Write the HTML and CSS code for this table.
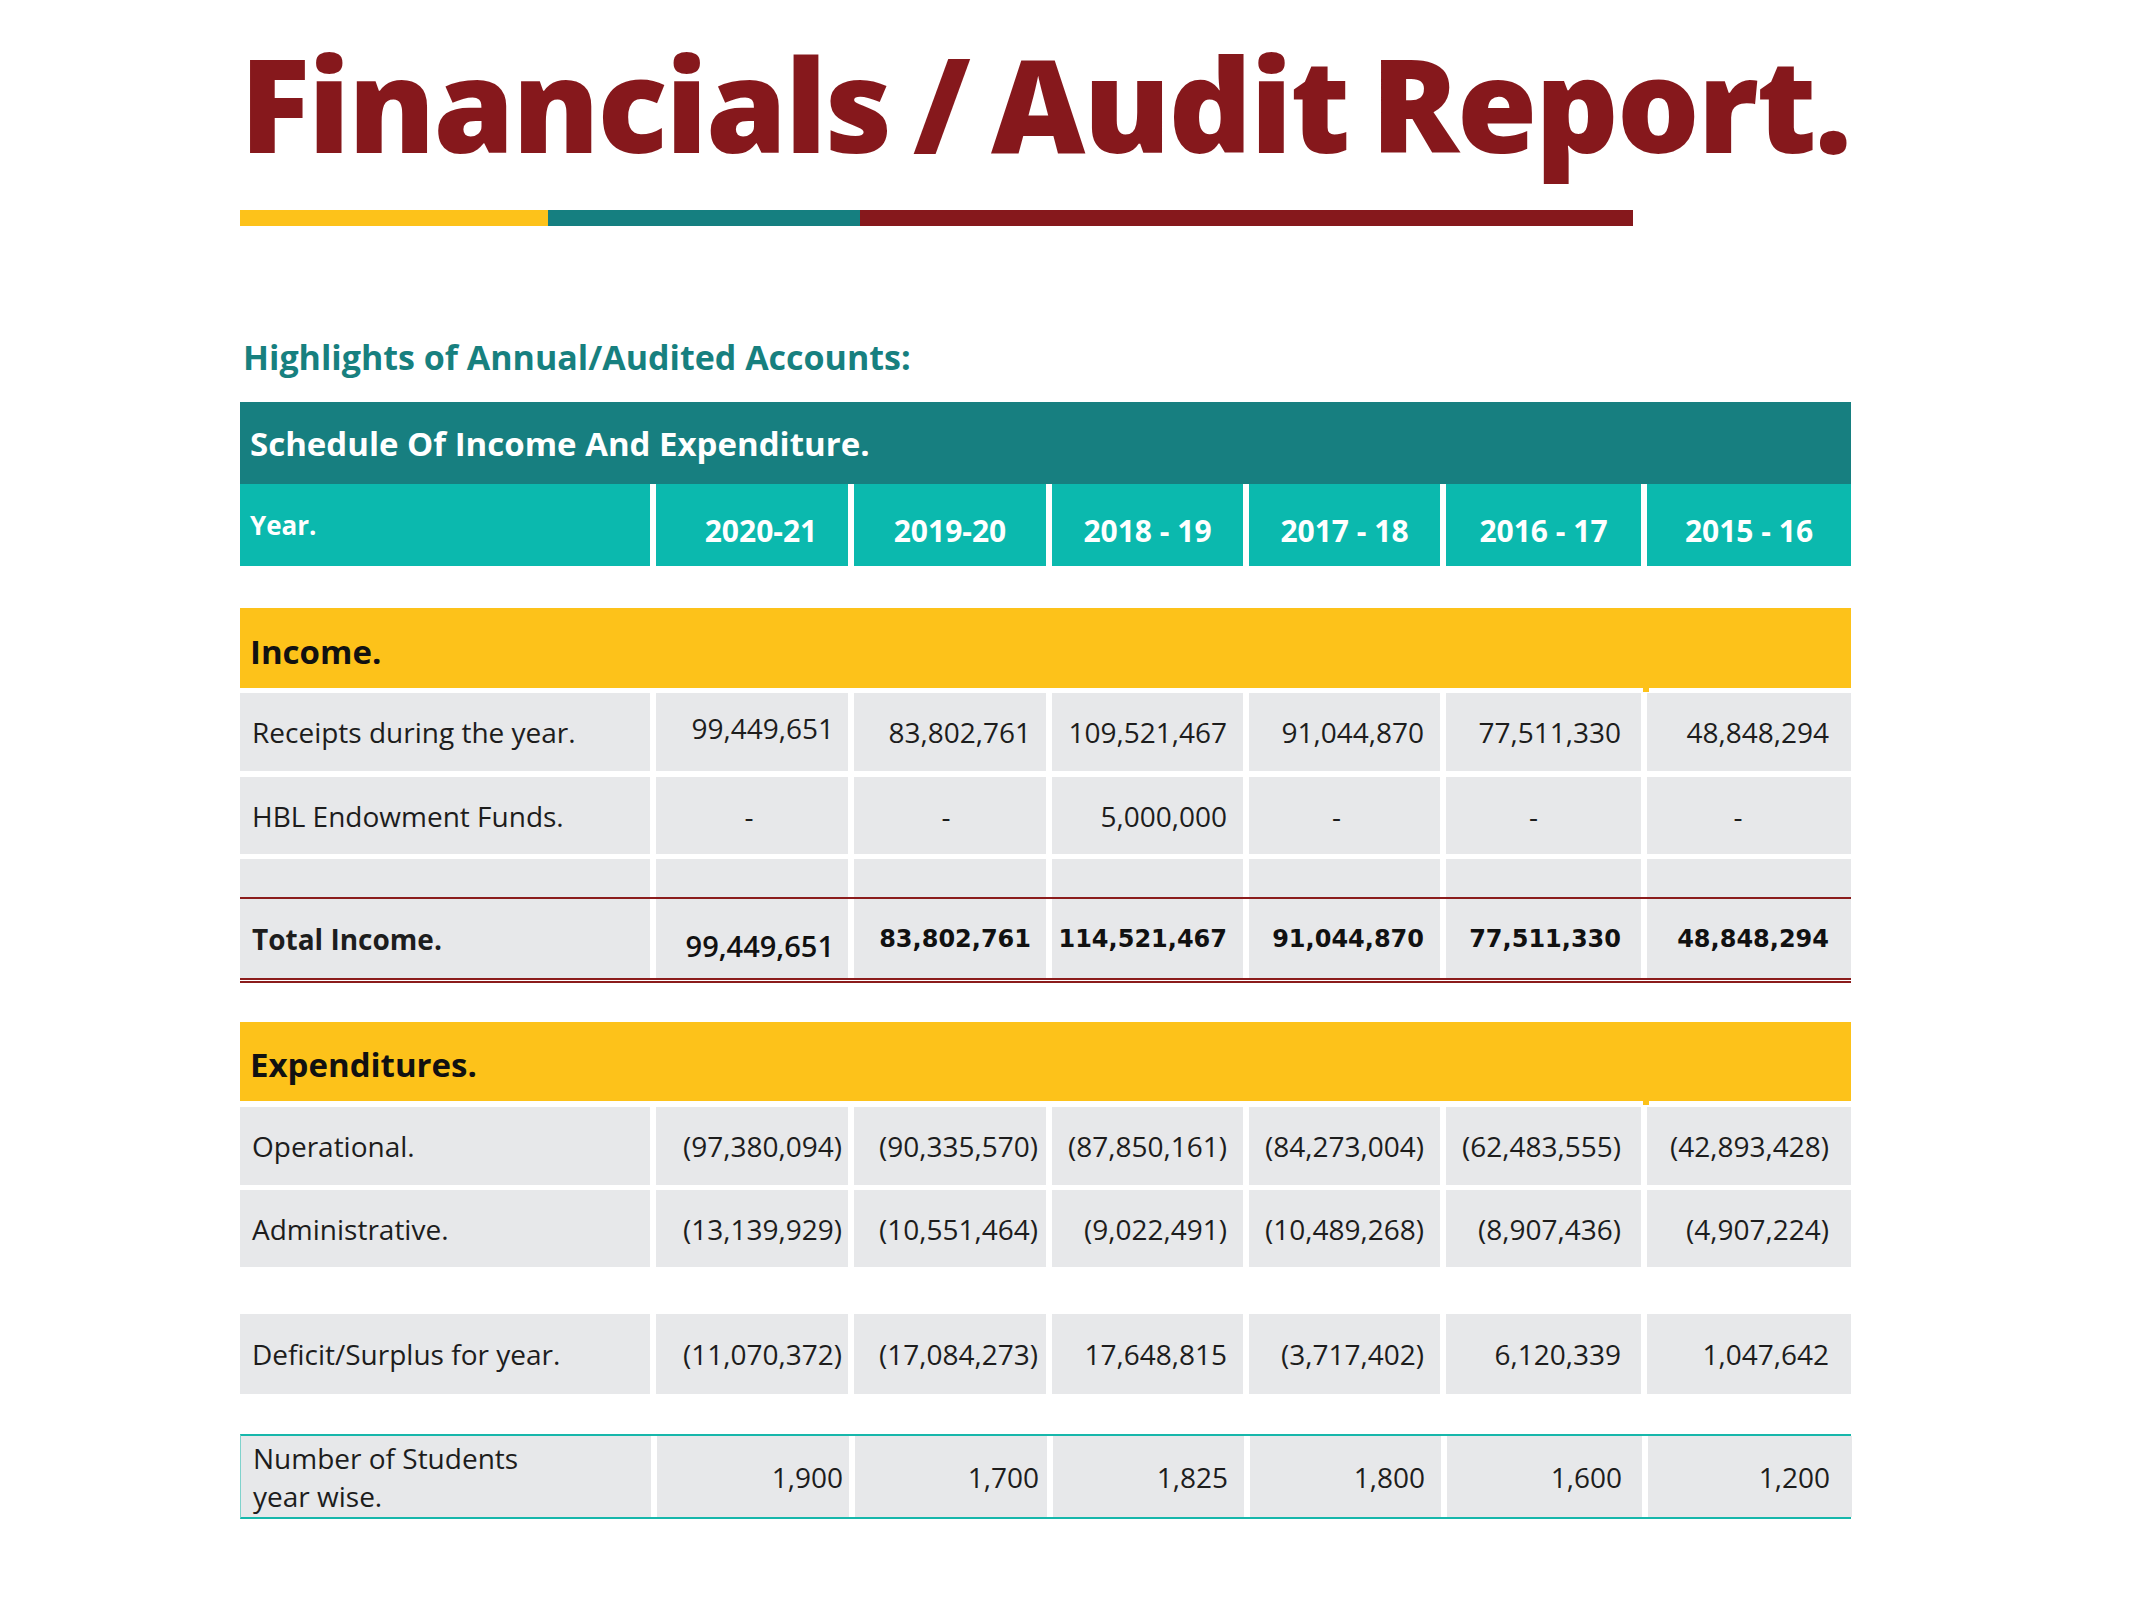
FILE: index.html
```html
<!DOCTYPE html>
<html lang="en">
<head>
<meta charset="utf-8">
<title>Financials / Audit Report.</title>
<link rel="stylesheet" href="styles.css">
</head>
<body>
<div class="page">
  <h1 class="title">Financials / Audit Report.</h1>
  <div class="stripe"><span class="s-yellow"></span><span class="s-teal"></span><span class="s-maroon"></span></div>
  <h2 class="subtitle">Highlights of Annual/Audited Accounts:</h2>

  <div class="table">
    <div class="caption">Schedule Of Income And Expenditure.</div>
    <div class="row head">
      <div class="cell label">Year.</div>
      <div class="cell year">2020-21</div>
      <div class="cell year">2019-20</div>
      <div class="cell year">2018 - 19</div>
      <div class="cell year">2017 - 18</div>
      <div class="cell year">2016 - 17</div>
      <div class="cell year">2015 - 16</div>
    </div>

    <div class="section income">Income.</div>
    <div class="row data receipts">
      <div class="cell label">Receipts during the year.</div>
      <div class="cell num first-up">99,449,651</div>
      <div class="cell num">83,802,761</div>
      <div class="cell num">109,521,467</div>
      <div class="cell num">91,044,870</div>
      <div class="cell num">77,511,330</div>
      <div class="cell num">48,848,294</div>
    </div>
    <div class="row data hbl">
      <div class="cell label">HBL Endowment Funds.</div>
      <div class="cell dash">-</div>
      <div class="cell dash">-</div>
      <div class="cell num">5,000,000</div>
      <div class="cell dash">-</div>
      <div class="cell dash">-</div>
      <div class="cell dash last-dash">-</div>
    </div>
    <div class="row data empty">
      <div class="cell label"></div>
      <div class="cell"></div>
      <div class="cell"></div>
      <div class="cell"></div>
      <div class="cell"></div>
      <div class="cell"></div>
      <div class="cell"></div>
    </div>
    <div class="row data total">
      <div class="cell label">Total Income.</div>
      <div class="cell num first-low">99,449,651</div>
      <div class="cell num">83,802,761</div>
      <div class="cell num">114,521,467</div>
      <div class="cell num">91,044,870</div>
      <div class="cell num">77,511,330</div>
      <div class="cell num">48,848,294</div>
    </div>

    <div class="section expenditures">Expenditures.</div>
    <div class="row data operational">
      <div class="cell label">Operational.</div>
      <div class="cell num">(97,380,094)</div>
      <div class="cell num">(90,335,570)</div>
      <div class="cell num">(87,850,161)</div>
      <div class="cell num">(84,273,004)</div>
      <div class="cell num">(62,483,555)</div>
      <div class="cell num">(42,893,428)</div>
    </div>
    <div class="row data administrative">
      <div class="cell label">Administrative.</div>
      <div class="cell num">(13,139,929)</div>
      <div class="cell num">(10,551,464)</div>
      <div class="cell num">(9,022,491)</div>
      <div class="cell num">(10,489,268)</div>
      <div class="cell num">(8,907,436)</div>
      <div class="cell num">(4,907,224)</div>
    </div>

    <div class="row data deficit">
      <div class="cell label">Deficit/Surplus for year.</div>
      <div class="cell num">(11,070,372)</div>
      <div class="cell num">(17,084,273)</div>
      <div class="cell num">17,648,815</div>
      <div class="cell num">(3,717,402)</div>
      <div class="cell num">6,120,339</div>
      <div class="cell num">1,047,642</div>
    </div>

    <div class="row data students">
      <div class="cell label">Number of Students<br>year wise.</div>
      <div class="cell num">1,900</div>
      <div class="cell num">1,700</div>
      <div class="cell num">1,825</div>
      <div class="cell num">1,800</div>
      <div class="cell num">1,600</div>
      <div class="cell num">1,200</div>
    </div>
  </div>
</div>
</body>
</html>
```
FILE: styles.css
```css
* { box-sizing: border-box; }

body {
  margin: 0;
  background: #ffffff;
  font-family: "Open Sans", "Noto Sans", "Liberation Sans", sans-serif;
  color: #1d1d1d;
}

.page {
  padding-left: 240px;
  width: 1851px;
}

.title {
  margin: 38px 0 0 0;
  font-size: 130px;
  line-height: 130px;
  font-weight: 800;
  color: #86181c;
  white-space: nowrap;
  letter-spacing: -2px;
  word-spacing: -9px;
}

.stripe {
  display: flex;
  margin-top: 42px;
  height: 16px;
}
.stripe span { display: block; height: 100%; }
.s-yellow { width: 308px; background: #fdc21a; }
.s-teal { width: 312px; background: #157f80; }
.s-maroon { width: 773px; background: #86181c; }

.subtitle {
  margin: 109px 0 0 0;
  padding-left: 3px;
  font-size: 34px;
  line-height: 44px;
  font-weight: 700;
  color: #17807f;
}

.table {
  margin-top: 23px;
  width: 1611px;
}

.caption {
  height: 82px;
  display: flex;
  align-items: center;
  padding-left: 10px;
  background: #177f80;
  color: #ffffff;
  font-size: 33px;
  font-weight: 700;
}

.row {
  display: grid;
  grid-template-columns: 410px 192px 192px 191px 191px 195px 204px;
  column-gap: 6px;
}

.cell {
  display: flex;
  align-items: center;
  justify-content: flex-end;
  font-size: 28px;
}

.head { height: 82px; }
.head .cell {
  background: #0bb9ae;
  color: #ffffff;
  font-weight: 700;
  align-items: flex-start;
}
.head .label {
  justify-content: flex-start;
  padding: 26px 0 0 10px;
  font-size: 26px;
  line-height: 31px;
}
.head .year {
  justify-content: center;
  padding-top: 30px;
  font-size: 30px;
  line-height: 34px;
}
.head .cell:nth-child(2) { padding-left: 18px; }

.section {
  position: relative;
  height: 80px;
  display: flex;
  align-items: center;
  padding: 6px 0 0 10px;
  background: #fdc21a;
  color: #111111;
  font-size: 33px;
  font-weight: 700;
}
.section::after {
  content: "";
  position: absolute;
  left: 1403px;
  bottom: -4px;
  width: 6px;
  height: 4px;
  background: #fdc21a;
}
.income { margin-top: 42px; }
.expenditures { margin-top: 39px; height: 79px; }

.data .cell { background: #e7e8ea; }
.data .label {
  justify-content: flex-start;
  padding-left: 12px;
}

.data .cell:nth-child(2) { padding-right: 6px; }
.data .cell:nth-child(3) { padding-right: 8px; }
.data .cell:nth-child(4) { padding-right: 16px; }
.data .cell:nth-child(5) { padding-right: 16px; }
.data .cell:nth-child(6) { padding-right: 20px; }
.data .cell:nth-child(7) { padding-right: 22px; }
.receipts .cell:nth-child(2), .total .cell:nth-child(2) { padding-right: 14px; }
.receipts .cell:nth-child(3), .total .cell:nth-child(3) { padding-right: 15px; }

.data .dash { justify-content: center; padding-right: 0; }
.data .last-dash { padding-right: 54px; }

.receipts { margin-top: 5px; height: 78px; }
.first-up { padding-bottom: 8px; }
.hbl { margin-top: 6px; height: 77px; }
.empty { margin-top: 5px; height: 38px; }

.total {
  height: 86px;
  border-top: 2px solid #8b1c1c;
  border-bottom: 5px double #8b1c1c;
}
.total .cell { font-weight: 700; }
.total .num {
  font-family: "DejaVu Sans", "Verdana", sans-serif;
  font-size: 24px;
  color: #111111;
}
.total .num.first-low {
  font-family: "Open Sans", "Noto Sans", sans-serif;
  font-weight: 600;
  padding-top: 14px;
  font-size: 29px;
}

.operational { margin-top: 6px; height: 78px; }
.administrative { margin-top: 5px; height: 77px; }
.deficit { margin-top: 47px; height: 80px; }

.students {
  margin-top: 40px;
  height: 85px;
  border-top: 2px solid #17b7ab;
  border-bottom: 2px solid #17b7ab;
  border-left: 1px solid #7fd2cc;
  border-right: 1px solid #17b7ab;
}
.students .label {
  align-items: flex-start;
  padding-top: 3px;
  line-height: 38px;
}
```
